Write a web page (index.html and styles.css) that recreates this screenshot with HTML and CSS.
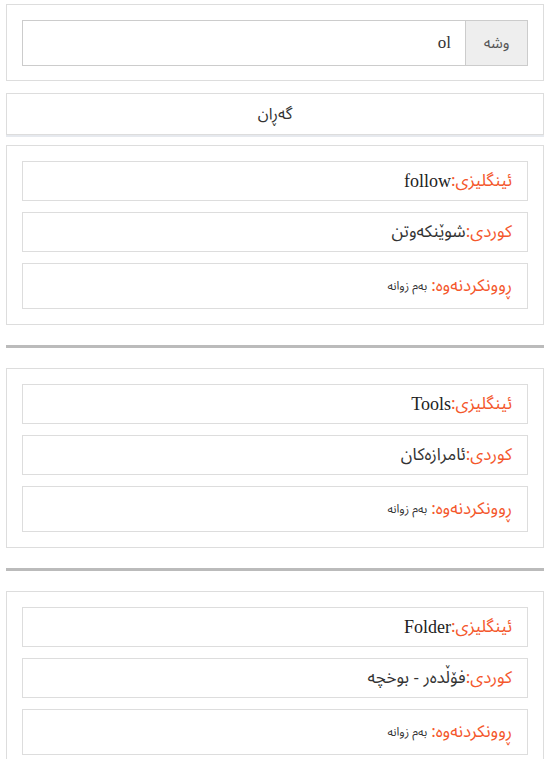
FILE: index.html
```html
<!DOCTYPE html>
<html lang="ckb" dir="rtl">
<head>
  <meta charset="UTF-8">
  <meta name="viewport" content="width=device-width, initial-scale=1.0">
  <title>فەرهەنگ</title>
  <link rel="stylesheet" href="styles.css">
</head>
<body>
  <div class="container">
    <div class="panel search-panel">
      <div class="input-group">
        <span class="addon">وشه</span>
        <input type="text" class="word-input" value="ol">
      </div>
    </div>
    <button type="button" class="btn">گەڕان</button>

    <div class="panel">
      <div class="item"><span class="label">ئینگلیزی:</span><span class="en">follow</span></div>
      <div class="item"><span class="label">کوردی:</span>شوێنکەوتن</div>
      <div class="item desc"><span class="label">ڕوونکردنەوە:</span> <small>بەم زوانە</small></div>
    </div>
    <hr>
    <div class="panel">
      <div class="item"><span class="label">ئینگلیزی:</span><span class="en">Tools</span></div>
      <div class="item"><span class="label">کوردی:</span>ئامرازەکان</div>
      <div class="item desc"><span class="label">ڕوونکردنەوە:</span> <small>بەم زوانە</small></div>
    </div>
    <hr>
    <div class="panel">
      <div class="item"><span class="label">ئینگلیزی:</span><span class="en">Folder</span></div>
      <div class="item"><span class="label">کوردی:</span>فۆڵدەر - بوخچە</div>
      <div class="item desc"><span class="label">ڕوونکردنەوە:</span> <small>بەم زوانە</small></div>
    </div>
  </div>
</body>
</html>
```

FILE: styles.css
```css
body {
  margin: 0;
  font-family: "Noto Sans Arabic", "Noto Sans", "DejaVu Sans", sans-serif;
  font-size: 17px;
  color: #333;
  background: #fff;
}
.container {
  padding: 4px 10px 0 6px;
}
.panel {
  border: 1px solid #ddd;
  padding: 15px;
  background: #fff;
}
.search-panel {
  padding: 15px 15px 14px;
}
.input-group {
  display: flex;
  height: 46px;
}
.addon {
  width: 61px;
  flex: none;
  background: #eee;
  border: 1px solid #ccc;
  display: flex;
  align-items: center;
  justify-content: center;
  font-size: 15px;
  color: #555;
}
.word-input {
  flex: 1;
  min-width: 0;
  border: 1px solid #ccc;
  border-right: none;
  padding: 0 14px;
  font-family: "Liberation Serif", serif;
  font-size: 17px;
  color: #333;
  text-align: right;
  outline: none;
}
.btn {
  display: block;
  width: 100%;
  margin: 12px 0 10px;
  height: 42px;
  background: #fff;
  border: 1px solid #ddd;
  box-shadow: 0 2px 0 #e6e9ee;
  font-family: inherit;
  font-size: 16px;
  color: #333;
  padding: 0;
}
.item {
  border: 1px solid #ddd;
  padding: 0 15px;
  height: 38px;
  display: flex;
  align-items: center;
  font-size: 17px;
  margin-bottom: 11px;
}
.item:last-child {
  margin-bottom: 0;
}
.item.desc {
  height: 44px;
}
.label {
  color: #f4572c;
}
.en {
  font-family: "Liberation Serif", serif;
  font-size: 18px;
  color: #222;
}
small {
  font-size: 12px;
  color: #333;
  margin-right: 4px;
}
hr {
  border: none;
  height: 3px;
  background: #bbb;
  margin: 20px 0;
}
```
